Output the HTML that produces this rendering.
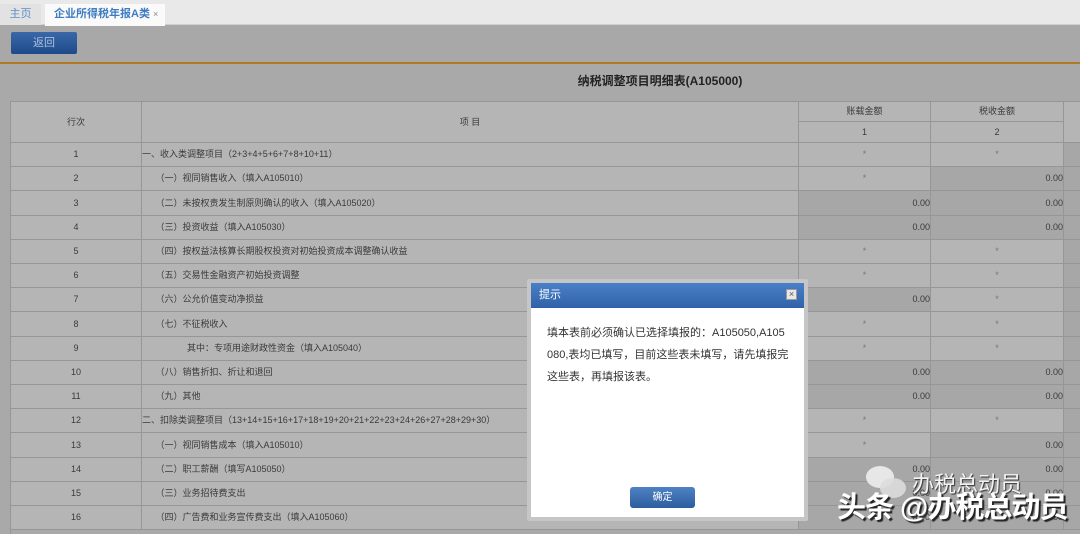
<!DOCTYPE html>
<html><head><meta charset="utf-8"><style>
*{margin:0;padding:0;box-sizing:border-box}
body{width:1080px;height:534px;overflow:hidden;background:#a9a9a9;font-family:"Liberation Sans","Noto Sans CJK SC",sans-serif;font-size:9px;color:#3a3a3a;position:relative}
.abs{position:absolute}
.c{position:absolute;border-right:1px solid #969696;border-bottom:1px solid #969696;background:#b5b5b5;line-height:24px;white-space:nowrap;overflow:hidden}
.d{background:#a7a7a7}
.ctr{text-align:center}
.r{text-align:right}
</style></head><body>
<div class="abs" style="left:0;top:0;width:1080px;height:25px;background:#e9e9e9;border-bottom:1px solid #d0d0d0"></div>
<div class="abs" style="left:0;top:4px;width:41px;height:21px;background:#e2e2e2;color:#5a8fc8;font-size:11px;line-height:21px;text-align:center">主页</div>
<div class="abs" style="left:45px;top:4px;width:120px;height:22px;background:#fafafa;color:#3d7cc0;font-size:11px;font-weight:bold;line-height:21px;padding-left:9px">企业所得税年报A类 <span style="color:#888;font-weight:normal;font-size:9px">×</span></div>
<div class="abs" style="left:0;top:26px;width:1080px;height:36px;background:#a8a8a8"></div>
<div class="abs" style="left:11px;top:32px;width:66px;height:22px;background:linear-gradient(#3a68a8,#1f4a8a);border-radius:2px;color:#aac0e0;font-size:11px;text-align:center;line-height:22px">返回</div>
<div class="abs" style="left:0;top:62px;width:1080px;height:2px;background:#b07a24"></div>
<div class="abs" style="left:0;top:72px;width:1320px;text-align:center;font-size:12px;font-weight:bold;color:#222">纳税调整项目明细表(A105000)</div>
<div class="abs" style="left:10px;top:101px;width:1070px;height:1px;background:#969696"></div>
<div class="abs" style="left:10px;top:101px;width:1px;height:433px;background:#969696"></div>
<div class="c ctr" style="left:11px;top:102px;width:131px;height:41px;line-height:40px">行次</div>
<div class="c ctr" style="left:142px;top:102px;width:657px;height:41px;line-height:40px">项 目</div>
<div class="c ctr" style="left:799px;top:102px;width:132px;height:20px;line-height:19px">账载金额</div>
<div class="c ctr" style="left:931px;top:102px;width:133px;height:20px;line-height:19px">税收金额</div>
<div class="c ctr" style="left:799px;top:122px;width:132px;height:21px;line-height:20px">1</div>
<div class="c ctr" style="left:931px;top:122px;width:133px;height:21px;line-height:20px">2</div>
<div class="c" style="left:1064px;top:102px;width:20px;height:41px"></div>
<div id="rows"></div>
<script>
var rows=[
["1","一、收入类调整项目（2+3+4+5+6+7+8+10+11）","*","*",0,0,1],
["2","　　（一）视同销售收入（填入A105010）","*","0.00",0,1],
["3","　　（二）未按权责发生制原则确认的收入（填入A105020）","0.00","0.00",1,1],
["4","　　（三）投资收益（填入A105030）","0.00","0.00",1,1],
["5","　　（四）按权益法核算长期股权投资对初始投资成本调整确认收益","*","*",0,0],
["6","　　（五）交易性金融资产初始投资调整","*","*",0,0],
["7","　　（六）公允价值变动净损益","0.00","*",1,0],
["8","　　（七）不征税收入","*","*",0,0],
["9","　　　　　其中：专项用途财政性资金（填入A105040）","*","*",0,0],
["10","　　（八）销售折扣、折让和退回","0.00","0.00",1,1],
["11","　　（九）其他","0.00","0.00",1,1],
["12","二、扣除类调整项目（13+14+15+16+17+18+19+20+21+22+23+24+26+27+28+29+30）","*","*",0,0],
["13","　　（一）视同销售成本（填入A105010）","*","0.00",0,1],
["14","　　（二）职工薪酬（填写A105050）","0.00","0.00",1,1],
["15","　　（三）业务招待费支出","0.00","0.00",1,1],
["16","　　（四）广告费和业务宣传费支出（填入A105060）","0.00","0.00",1,1]];
var h="";
for(var i=0;i<rows.length;i++){var r=rows[i],t=143+Math.round(i*24.2),hh=Math.round((i+1)*24.2)-Math.round(i*24.2);
function cell(v,dk,l,w){var st=v=="*"?"ctr":"r";return '<div class="c '+st+(dk?' d':'')+'" style="left:'+l+'px;top:'+t+'px;width:'+w+'px;height:'+hh+'px;line-height:'+(hh-1)+'px'+(v=="*"?';color:#777':'')+'">'+v+'</div>'}
h+='<div class="c ctr" style="left:11px;top:'+t+'px;width:131px;height:'+hh+'px;line-height:'+(hh-1)+'px">'+r[0]+'</div>';
h+='<div class="c" style="left:142px;top:'+t+'px;width:657px;height:'+hh+'px;line-height:'+(hh-1)+'px">'+r[1]+'</div>';
h+=cell(r[2],r[4],799,132)+cell(r[3],r[5],931,133);
h+='<div class="c d" style="left:1064px;top:'+t+'px;width:20px;height:'+hh+'px"></div>';}
document.getElementById("rows").innerHTML=h;
</script>
<div class="abs" style="left:527px;top:279px;width:281px;height:242px;background:#c6c6c6;border-radius:2px"></div>
<div class="abs" style="left:531px;top:283px;width:273px;height:25px;background:linear-gradient(#4a80c8,#2f62a8);color:#fff;font-size:11px;line-height:25px;padding-left:8px">提示</div>
<div class="abs" style="left:786px;top:289px;width:11px;height:11px;background:#e8e8e8;border:1px solid #999;font-size:9px;line-height:9px;text-align:center;color:#555">×</div>
<div class="abs" style="left:531px;top:308px;width:273px;height:209px;background:#fff"></div>
<div class="abs" style="left:547px;top:322px;width:242px;font-size:11px;line-height:22px;color:#333;word-break:break-all">填本表前必须确认已选择填报的：A105050,A105080,表均已填写，目前这些表未填写，请先填报完这些表，再填报该表。</div>
<div class="abs" style="left:630px;top:487px;width:65px;height:21px;background:linear-gradient(#4f82c4,#2d5d9e);border-radius:3px;color:#fff;font-size:10px;text-align:center;line-height:21px">确定</div>
<div class="abs" style="left:866px;top:466px;width:28px;height:22px;background:#eee;border-radius:50%;opacity:.9"></div>
<div class="abs" style="left:880px;top:478px;width:26px;height:20px;background:#ddd;border-radius:50%;opacity:.9"></div>
<div class="abs" style="left:912px;top:467px;font-size:22px;color:#f3f3f3;text-shadow:1px 1px 1px #333">办税总动员</div>
<div class="abs" style="left:837px;top:484px;font-size:29px;color:#fff;font-weight:bold;text-shadow:2px 2px 1px #222;letter-spacing:-1px">头条 @办税总动员</div>
</body></html>
